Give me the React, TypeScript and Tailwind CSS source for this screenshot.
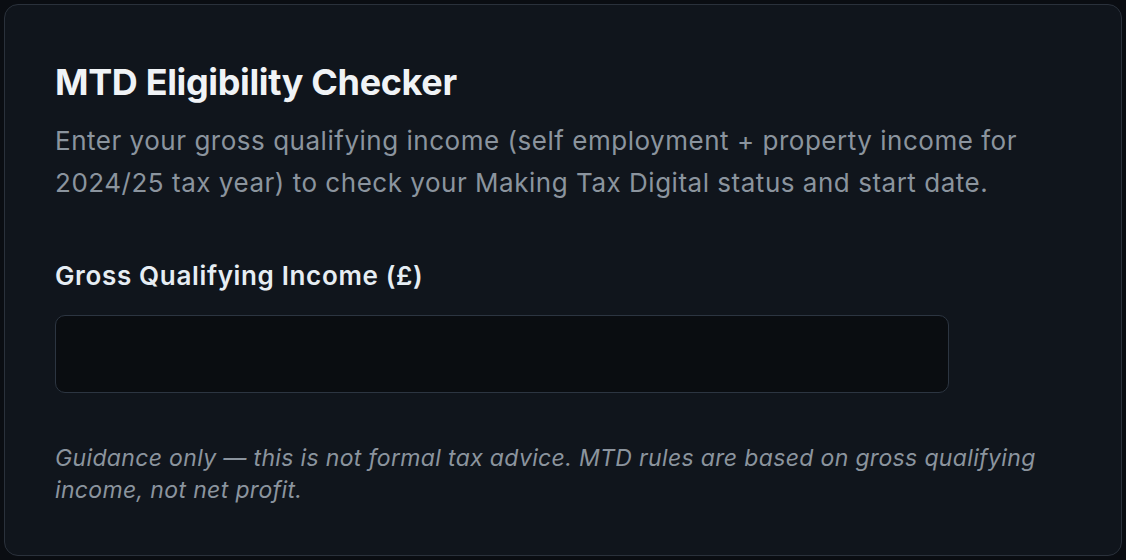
export default function App() {
  return (
    <div
      className="w-[1126px] h-[560px] bg-[#0a0d12] p-[4px]"
      style={{ fontFamily: "Inter, 'Noto Sans', sans-serif" }}
    >
      <div className="h-[552px] w-[1118px] rounded-[14px] border border-[#2a313b] bg-[#10151c] px-[50px] pt-[57px]">
        <h1 className="text-[36px] leading-[40px] font-bold tracking-[-0.01em] text-[#f0f3f6]">
          MTD Eligibility Checker
        </h1>
        <p className="mt-[18px] text-[26px] leading-[42px] tracking-[0.02em] text-[#8b949e]">
          Enter your gross qualifying income (self employment + property income for
          2024/25 tax year) to check your Making Tax Digital status and start date.
        </p>
        <label
          htmlFor="income"
          className="mt-[54px] block text-[26px] leading-[36px] font-semibold tracking-[0.025em] text-[#e6edf3]"
        >
          Gross Qualifying Income (£)
        </label>
        <input
          id="income"
          type="text"
          className="mt-[21px] block h-[78px] w-[894px] rounded-[10px] border border-[#2c3541] bg-[#0a0d11] px-5 text-[26px] text-[#e6edf3] outline-none"
        />
        <p className="mt-[49px] text-[23px] leading-[32px] italic tracking-[0.015em] text-[#8b949e]">
          Guidance only — this is not formal tax advice. MTD rules are based on gross qualifying
          income, not net profit.
        </p>
      </div>
    </div>
  );
}
